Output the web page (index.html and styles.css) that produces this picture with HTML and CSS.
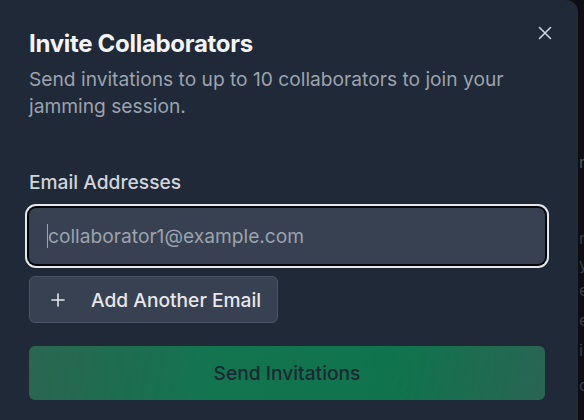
FILE: index.html
```html
<!DOCTYPE html>
<html lang="en">
<head>
<meta charset="utf-8">
<title>Invite Collaborators</title>
<link rel="stylesheet" href="styles.css">
</head>
<body>
<div class="screen">
  <section class="dialog">
    <button class="close" aria-label="Close">
      <svg width="14" height="14" viewBox="0 0 14 14"><path d="M1.5 1.5 L12.5 12.5 M12.5 1.5 L1.5 12.5" stroke="#cbd5e1" stroke-width="1.6" stroke-linecap="round"/></svg>
    </button>
    <h2 class="title">Invite Collaborators</h2>
    <p class="subtitle">Send invitations to up to 10 collaborators to join your jamming session.</p>
    <label class="label" for="email1">Email Addresses</label>
    <div class="input"><span class="caret"></span><span class="placeholder">collaborator1@example.com</span></div>
    <button class="add">
      <svg width="14" height="14" viewBox="0 0 14 14"><path d="M7 1 V13 M1 7 H13" stroke="#e5e7eb" stroke-width="1.6" stroke-linecap="round"/></svg>
      <span>Add Another Email</span>
    </button>
    <button class="send">Send Invitations</button>
  </section>
  <div class="backdrop">
    <span class="g1">n</span>
    <span class="g2">r</span>
    <span class="g3">y</span>
    <span class="g4">e</span>
    <span class="g5">e</span>
    <span class="g6">i</span>
    <span class="g7">c</span>
  </div>
</div>
</body>
</html>
```
FILE: styles.css
```css
* { box-sizing: border-box; }
html, body { margin: 0; padding: 0; }
body {
  width: 584px;
  height: 420px;
  overflow: hidden;
  background: #0c0e12;
  font-family: Inter, "Noto Sans", sans-serif;
}
.screen {
  display: flex;
  height: 420px;
}
.dialog {
  position: relative;
  width: 578px;
  flex: none;
  height: 420px;
  background: #1f2937;
  border-top-right-radius: 12px;
  padding: 28px 33px 0 29px;
  display: flex;
  flex-direction: column;
}
.close {
  position: absolute;
  top: 26px;
  right: 26px;
  background: none;
  border: 0;
  padding: 0;
  width: 14px;
  height: 14px;
  display: flex;
}
.title {
  margin: 0;
  font-size: 24px;
  line-height: 32px;
  font-weight: 700;
  color: #f3f4f6;
  letter-spacing: -0.3px;
}
.subtitle {
  margin: 6px 0 0;
  font-size: 19.2px;
  line-height: 27px;
  color: #9ca3af;
  width: 500px;
}
.label {
  margin-top: 50px;
  font-size: 19.2px;
  line-height: 24px;
  font-weight: 500;
  color: #d1d5db;
}
.input {
  margin-top: 14px;
  height: 56px;
  width: 516px;
  background: #374151;
  border-radius: 7px;
  box-shadow: 0 0 0 2px #05070a, 0 0 0 4px #e5e7eb;
  display: flex;
  align-items: center;
  padding-left: 18px;
}
.caret {
  width: 1px;
  height: 24px;
  background: #9ca3af;
}
.placeholder {
  font-size: 19.2px;
  color: #9ca3af;
}
.add {
  margin-top: 12px;
  align-self: flex-start;
  height: 47px;
  width: 249px;
  background: #374151;
  border: 1px solid #4b5563;
  border-radius: 6px;
  display: flex;
  align-items: center;
  gap: 26px;
  padding: 0 0 0 21px;
  font-family: inherit;
  font-size: 19.2px;
  font-weight: 500;
  color: #e5e7eb;
}
.send {
  margin-top: 23px;
  height: 54px;
  width: 516px;
  border: 0;
  border-radius: 6px;
  background: linear-gradient(100deg, #2b6652 0%, #137450 35%, #0f744e 70%, #2a6553 100%);
  font-family: inherit;
  font-size: 19.2px;
  font-weight: 500;
  color: #1c2731;
}
.backdrop {
  flex: 1;
  position: relative;
  overflow: hidden;
  color: #3a3d42;
  font-size: 16px;
}
.backdrop span { position: absolute; left: 1px; }
.g1 { top: 152px; color: #555; }
.g2 { top: 228px; }
.g3 { top: 254px; }
.g4 { top: 280px; }
.g5 { top: 310px; }
.g6 { top: 340px; }
.g7 { top: 375px; }
```
